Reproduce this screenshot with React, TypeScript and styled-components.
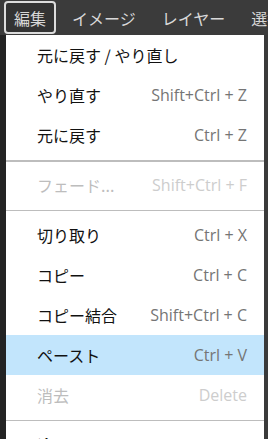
import React from "react";
import styled, { createGlobalStyle } from "styled-components";

const GlobalStyle = createGlobalStyle`
    html, body {
        margin: 0;
        padding: 0;
        width: 268px;
        height: 439px;
        overflow: hidden;
        background: #3a3a3a;
    }
`;

type Item = {
    label: string;
    shortcut?: string;
    disabled?: boolean;
    active?: boolean;
};

const groups: Item[][] = [
    [
        { label: "元に戻す / やり直し" },
        { label: "やり直す", shortcut: "Shift+Ctrl + Z" },
        { label: "元に戻す", shortcut: "Ctrl + Z" },
    ],
    [{ label: "フェード...", shortcut: "Shift+Ctrl + F", disabled: true }],
    [
        { label: "切り取り", shortcut: "Ctrl + X" },
        { label: "コピー", shortcut: "Ctrl + C" },
        { label: "コピー結合", shortcut: "Shift+Ctrl + C" },
        { label: "ペースト", shortcut: "Ctrl + V", active: true },
        { label: "消去", shortcut: "Delete", disabled: true },
    ],
    [{ label: "塗りつぶし...", shortcut: "Shift + F5" }],
];

export default function App() {
    return (
        <Page>
            <GlobalStyle />
            <MenuBar>
                <Tab $open>編集</Tab>
                <Tab>イメージ</Tab>
                <Tab>レイヤー</Tab>
                <Tab>選択</Tab>
            </MenuBar>
            <Workspace>
                <SidePanel />
                <Dropdown>
                    {groups.map((group, gi) => (
                        <React.Fragment key={gi}>
                            {gi > 0 && <Separator $thick={gi === 1} />}
                            {group.map((item) => (
                                <Row
                                    key={item.label}
                                    $disabled={item.disabled}
                                    $active={item.active}
                                >
                                    <Label>{item.label}</Label>
                                    {item.shortcut && (
                                        <Shortcut $disabled={item.disabled}>
                                            {item.shortcut}
                                        </Shortcut>
                                    )}
                                </Row>
                            ))}
                        </React.Fragment>
                    ))}
                </Dropdown>
            </Workspace>
        </Page>
    );
}

export const Page = styled.div`
    display: flex;
    flex-direction: column;
    width: 268px;
    height: 439px;
    font-family: "Open Sans", "Noto Sans CJK JP", sans-serif;
`;

export const MenuBar = styled.div`
    height: 35px;
    display: flex;
    align-items: center;
    gap: 6px;
    padding-left: 4px;
    background: #3b3b3b;
    white-space: nowrap;
    overflow: hidden;
    flex-shrink: 0;
`;

export const Tab = styled.div<{ $open?: boolean }>`
    height: 29px;
    padding: 0 8px;
    display: flex;
    align-items: center;
    border: 2px solid ${(p) => (p.$open ? "#dcdcdc" : "transparent")};
    border-radius: 4px;
    background: ${(p) => (p.$open ? "#333333" : "transparent")};
    color: #d8d8d8;
    font-size: 16px;
    font-family: "Noto Sans CJK JP", sans-serif;
    flex-shrink: 0;
`;

export const Workspace = styled.div`
    position: relative;
    flex: 1;
    display: flex;
    background: #3a3a3a;
`;

export const SidePanel = styled.div`
    width: 6px;
    background: #232323;
`;

export const Dropdown = styled.div`
    position: absolute;
    top: 0;
    left: 6px;
    width: 258px;
    background: #ffffff;
    display: flex;
    flex-direction: column;
`;

export const Row = styled.div<{ $disabled?: boolean; $active?: boolean }>`
    height: 40px;
    display: flex;
    align-items: center;
    justify-content: space-between;
    padding: 0 17px 0 31px;
    background: ${(p) => (p.$active ? "#c2e5fc" : "transparent")};
    color: ${(p) => (p.$disabled ? "#bdbdbd" : "#111111")};
    flex-shrink: 0;
`;

export const Label = styled.span`
    font-size: 16px;
    font-family: "Noto Sans CJK JP", sans-serif;
    white-space: nowrap;
`;

export const Shortcut = styled.span<{ $disabled?: boolean }>`
    font-size: 16px;
    font-family: "Open Sans", sans-serif;
    color: ${(p) => (p.$disabled ? "#cdcdcd" : "#757575")};
    white-space: nowrap;
`;

export const Separator = styled.div<{ $thick?: boolean }>`
    height: ${(p) => (p.$thick ? "2px" : "1px")};
    margin: 5px 0 ${(p) => (p.$thick ? "3px" : "4px")};
    background: #bdbdbd;
    flex-shrink: 0;
`;
